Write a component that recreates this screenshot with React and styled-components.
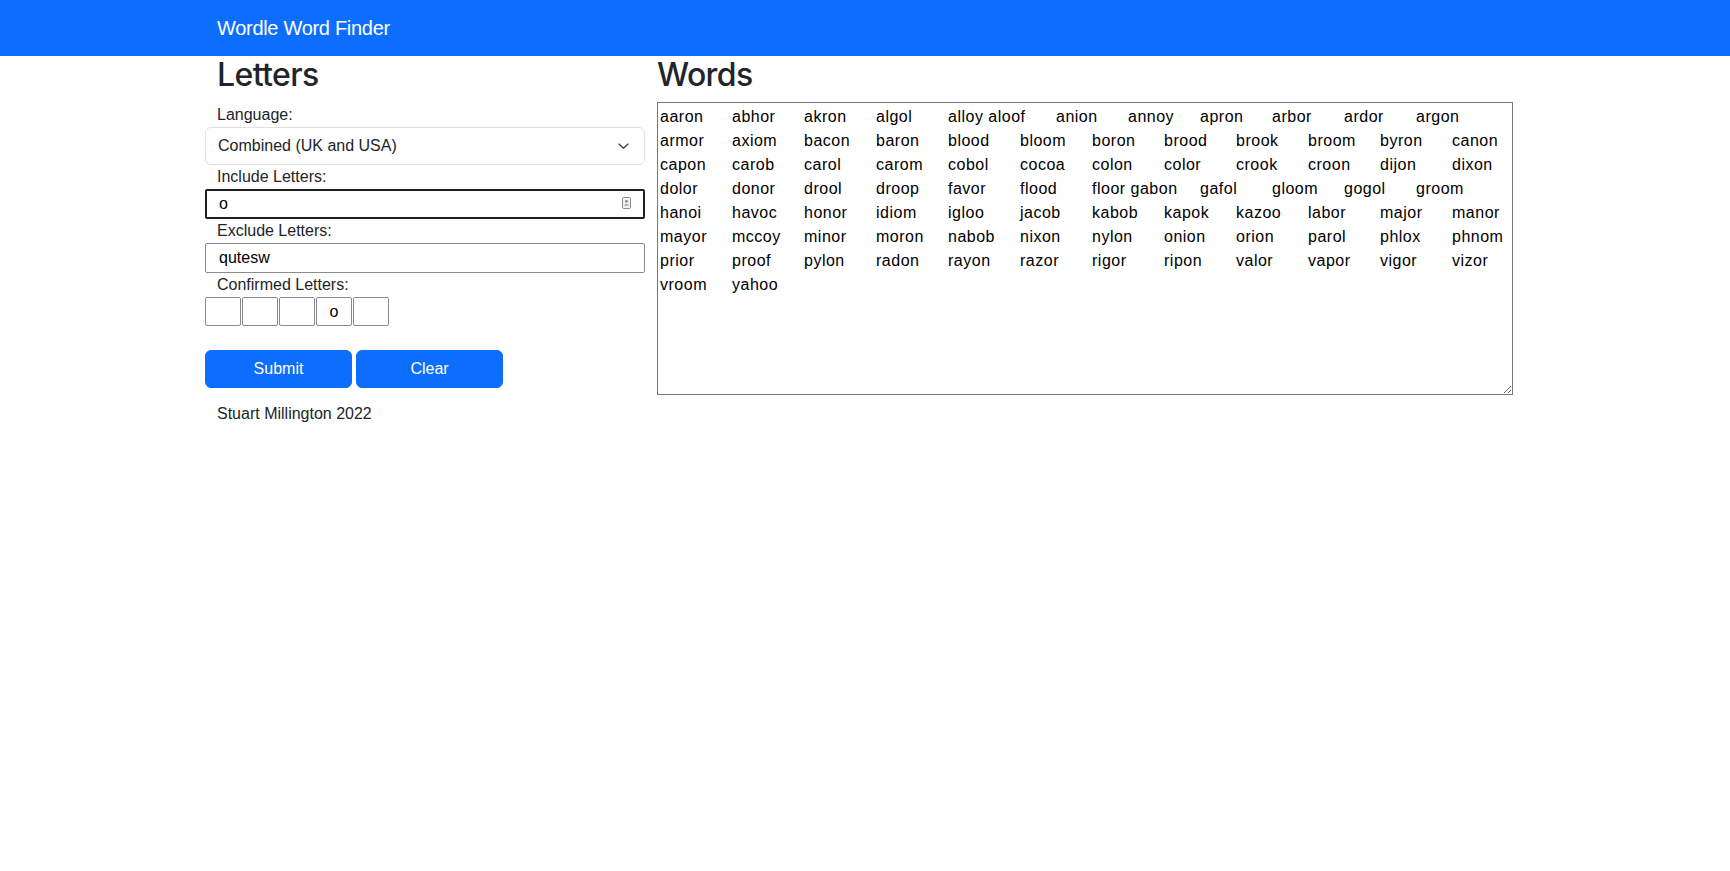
import React from 'react';
import styled, { createGlobalStyle } from 'styled-components';

const rows = [
  ['aaron', 'abhor', 'akron', 'algol', 'alloy aloof', 'anion', 'annoy', 'apron', 'arbor', 'ardor', 'argon'],
  ['armor', 'axiom', 'bacon', 'baron', 'blood', 'bloom', 'boron', 'brood', 'brook', 'broom', 'byron', 'canon'],
  ['capon', 'carob', 'carol', 'carom', 'cobol', 'cocoa', 'colon', 'color', 'crook', 'croon', 'dijon', 'dixon'],
  ['dolor', 'donor', 'drool', 'droop', 'favor', 'flood', 'floor gabon', 'gafol', 'gloom', 'gogol', 'groom'],
  ['hanoi', 'havoc', 'honor', 'idiom', 'igloo', 'jacob', 'kabob', 'kapok', 'kazoo', 'labor', 'major', 'manor'],
  ['mayor', 'mccoy', 'minor', 'moron', 'nabob', 'nixon', 'nylon', 'onion', 'orion', 'parol', 'phlox', 'phnom'],
  ['prior', 'proof', 'pylon', 'radon', 'rayon', 'razor', 'rigor', 'ripon', 'valor', 'vapor', 'vigor', 'vizor'],
  ['vroom', 'yahoo'],
];

const wordText = rows.map((r) => r.join('\t')).join('\n');

export default function App() {
  return (
    <>
      <GlobalStyle />
      <Navbar>
        <NavInner>
          <Brand>Wordle Word Finder</Brand>
        </NavInner>
      </Navbar>
      <Page>
        <LeftCol>
          <Heading $gap={9}>Letters</Heading>
          <FieldLabel>Language:</FieldLabel>
          <SelectWrap>
            <Select defaultValue="both">
              <option value="both">Combined (UK and USA)</option>
              <option value="uk">UK</option>
              <option value="usa">USA</option>
            </Select>
            <Chevron width="11" height="6" viewBox="0 0 11 6">
              <polyline points="0.7,0.7 5.5,5.2 10.3,0.7" fill="none" stroke="#3a3a3a" strokeWidth="1.3" />
            </Chevron>
          </SelectWrap>
          <FieldLabel>Include Letters:</FieldLabel>
          <InputWrap>
            <TextInput $active defaultValue="o" />
            <AutofillIcon width="9" height="12" viewBox="0 0 9 12">
              <rect x="0.5" y="0.5" width="8" height="11" rx="1.2" fill="#f2f2f2" stroke="#8a8a8a" />
              <circle cx="4.5" cy="4.3" r="1.4" fill="#8a8a8a" />
              <path d="M2.2 8.6 C2.4 6.9 6.6 6.9 6.8 8.6 Z" fill="#8a8a8a" />
            </AutofillIcon>
          </InputWrap>
          <FieldLabel>Exclude Letters:</FieldLabel>
          <TextInput defaultValue="qutesw" />
          <FieldLabel>Confirmed Letters:</FieldLabel>
          <LetterRow>
            {['', '', '', 'o', ''].map((l, i) => (
              <LetterBox key={i} maxLength={1} defaultValue={l} />
            ))}
          </LetterRow>
          <ButtonRow>
            <Button>Submit</Button>
            <Button>Clear</Button>
          </ButtonRow>
          <Footer>Stuart Millington 2022</Footer>
        </LeftCol>
        <RightCol>
          <Heading $gap={8} $flush>Words</Heading>
          <WordsArea defaultValue={wordText} spellCheck={false} />
        </RightCol>
      </Page>
    </>
  );
}

const GlobalStyle = createGlobalStyle`
  body {
    margin: 0;
    font-family: "Liberation Sans", Arial, sans-serif;
    font-size: 16px;
    line-height: 1.5;
    color: #212529;
    background: #fff;
  }
  * { box-sizing: border-box; }
`;

const Navbar = styled.nav`
  background: #0d6efd;
  height: 56px;
  display: flex;
  align-items: center;
`;

const NavInner = styled.div`
  width: 1320px;
  margin: 0 auto;
  padding: 0 12px;
`;

const Brand = styled.span`
  color: #fff;
  font-size: 20px;
  line-height: 30px;
  letter-spacing: -0.3px;
`;

const Page = styled.main`
  width: 1320px;
  margin: 0 auto;
  display: grid;
  grid-template-columns: 440px 880px;
`;

const LeftCol = styled.section`
  display: flex;
  flex-direction: column;
`;

const RightCol = styled.section`
  display: flex;
  flex-direction: column;
  padding: 0 12px;
`;

const Heading = styled.h2`
  margin: 0 0 ${(p) => p.$gap}px;
  padding-left: ${(p) => (p.$flush ? 0 : 12)}px;
  font-family: Inter, "Liberation Sans", sans-serif;
  font-weight: 500;
  font-size: 32px;
  line-height: 38.4px;
  letter-spacing: -0.6px;
  color: #212529;
`;

const FieldLabel = styled.label`
  display: block;
  padding-left: 12px;
  line-height: 24px;
`;

const SelectWrap = styled.div`
  position: relative;
  width: 440px;
`;

const Select = styled.select`
  appearance: none;
  width: 100%;
  height: 38px;
  padding: 6px 36px 6px 12px;
  border: 1px solid #dee2e6;
  border-radius: 6px;
  background: #fff;
  font: inherit;
  color: #212529;
`;

const Chevron = styled.svg`
  position: absolute;
  right: 16px;
  top: 16px;
  pointer-events: none;
`;

const InputWrap = styled.div`
  position: relative;
  width: 440px;
`;

const TextInput = styled.input`
  width: 440px;
  height: 30px;
  padding: 0 12px;
  font: inherit;
  font-family: "Liberation Sans", Arial, sans-serif;
  color: #000;
  background: #fff;
  border: ${(p) => (p.$active ? '2px solid #1f1f1f' : '1px solid #8b8b8b')};
  border-radius: 2px;
  padding-left: ${(p) => (p.$active ? '12px' : '13px')};
  outline: none;
`;

const AutofillIcon = styled.svg`
  position: absolute;
  right: 14px;
  top: 8px;
`;

const LetterRow = styled.div`
  display: flex;
  gap: 1px;
`;

const LetterBox = styled.input`
  width: 36px;
  height: 29px;
  padding: 0;
  text-align: center;
  font: inherit;
  color: #000;
  border: 1px solid #8b8b8b;
  border-radius: 2px;
  background: #fff;
`;

const ButtonRow = styled.div`
  display: flex;
  gap: 4px;
  margin-top: 24px;
`;

const Button = styled.button`
  width: 147px;
  height: 38px;
  border: 1px solid #0d6efd;
  border-radius: 6px;
  background: #0d6efd;
  color: #fff;
  font: inherit;
  cursor: pointer;
`;

const Footer = styled.p`
  margin: 14px 0 0;
  padding-left: 12px;
  line-height: 24px;
`;

const WordsArea = styled.textarea`
  width: 856px;
  height: 293px;
  margin: 0;
  padding: 2px;
  border: 1px solid #767676;
  border-radius: 0;
  font-family: "Liberation Sans", Arial, sans-serif;
  font-size: 16px;
  line-height: 24px;
  letter-spacing: 0.5px;
  font-kerning: none;
  tab-size: 36px;
  color: #000;
  resize: both;
  outline: none;
`;
